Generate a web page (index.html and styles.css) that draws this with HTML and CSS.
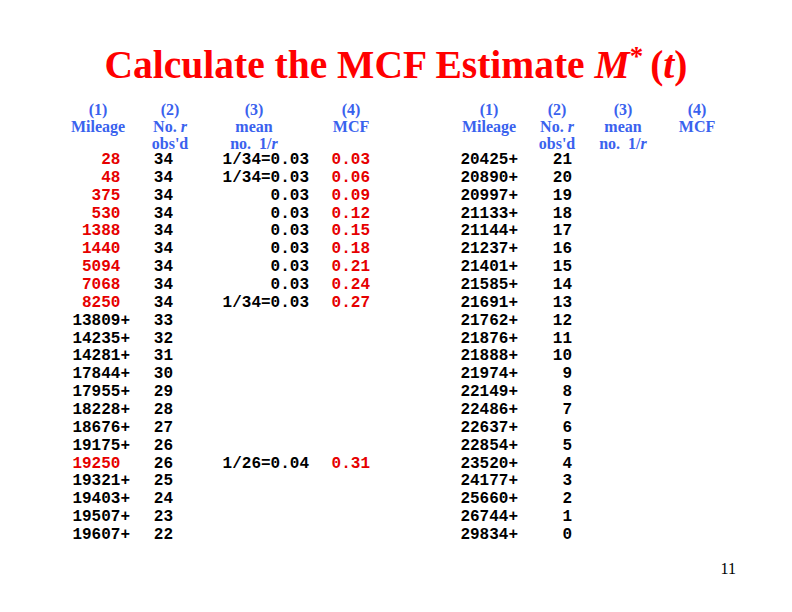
FILE: index.html
```html
<!DOCTYPE html>
<html>
<head>
<meta charset="utf-8">
<link rel="stylesheet" href="styles.css">
</head>
<body>
<div class="slide">
  <h1 class="title">Calculate the MCF Estimate <i>M</i><sup>*</sup><span class="paren">(<i>t</i>)</span></h1>
  <div class="tables">
    <div class="table left">
      <div class="col c1">
        <div class="hd">(1)<br>Mileage<br>&nbsp;</div>
        <div class="data">
          <div class="v red">28 </div><div class="v red">48 </div><div class="v red">375 </div><div class="v red">530 </div><div class="v red">1388 </div><div class="v red">1440 </div><div class="v red">5094 </div><div class="v red">7068 </div><div class="v red">8250 </div><div class="v">13809+</div><div class="v">14235+</div><div class="v">14281+</div><div class="v">17844+</div><div class="v">17955+</div><div class="v">18228+</div><div class="v">18676+</div><div class="v">19175+</div><div class="v red">19250 </div><div class="v">19321+</div><div class="v">19403+</div><div class="v">19507+</div><div class="v">19607+</div>
        </div>
      </div>
      <div class="col c2">
        <div class="hd">(2)<br>No. <i>r</i><br>obs'd</div>
        <div class="data">
          <div class="v">34</div><div class="v">34</div><div class="v">34</div><div class="v">34</div><div class="v">34</div><div class="v">34</div><div class="v">34</div><div class="v">34</div><div class="v">34</div><div class="v">33</div><div class="v">32</div><div class="v">31</div><div class="v">30</div><div class="v">29</div><div class="v">28</div><div class="v">27</div><div class="v">26</div><div class="v">26</div><div class="v">25</div><div class="v">24</div><div class="v">23</div><div class="v">22</div>
        </div>
      </div>
      <div class="col c3">
        <div class="hd">(3)<br>mean<br>no.&nbsp; 1/<i>r</i></div>
        <div class="data">
          <div class="v">1/34=0.03</div><div class="v">1/34=0.03</div><div class="v">0.03</div><div class="v">0.03</div><div class="v">0.03</div><div class="v">0.03</div><div class="v">0.03</div><div class="v">0.03</div><div class="v">1/34=0.03</div><div class="v"></div><div class="v"></div><div class="v"></div><div class="v"></div><div class="v"></div><div class="v"></div><div class="v"></div><div class="v"></div><div class="v">1/26=0.04</div>
        </div>
      </div>
      <div class="col c4">
        <div class="hd">(4)<br>MCF<br>&nbsp;</div>
        <div class="data">
          <div class="v red">0.03</div><div class="v red">0.06</div><div class="v red">0.09</div><div class="v red">0.12</div><div class="v red">0.15</div><div class="v red">0.18</div><div class="v red">0.21</div><div class="v red">0.24</div><div class="v red">0.27</div><div class="v"></div><div class="v"></div><div class="v"></div><div class="v"></div><div class="v"></div><div class="v"></div><div class="v"></div><div class="v"></div><div class="v red">0.31</div>
        </div>
      </div>
    </div>
    <div class="table right">
      <div class="col r1">
        <div class="hd">(1)<br>Mileage<br>&nbsp;</div>
        <div class="data">
          <div class="v">20425+</div><div class="v">20890+</div><div class="v">20997+</div><div class="v">21133+</div><div class="v">21144+</div><div class="v">21237+</div><div class="v">21401+</div><div class="v">21585+</div><div class="v">21691+</div><div class="v">21762+</div><div class="v">21876+</div><div class="v">21888+</div><div class="v">21974+</div><div class="v">22149+</div><div class="v">22486+</div><div class="v">22637+</div><div class="v">22854+</div><div class="v">23520+</div><div class="v">24177+</div><div class="v">25660+</div><div class="v">26744+</div><div class="v">29834+</div>
        </div>
      </div>
      <div class="col r2">
        <div class="hd">(2)<br>No. <i>r</i><br>obs'd</div>
        <div class="data">
          <div class="v">21</div><div class="v">20</div><div class="v">19</div><div class="v">18</div><div class="v">17</div><div class="v">16</div><div class="v">15</div><div class="v">14</div><div class="v">13</div><div class="v">12</div><div class="v">11</div><div class="v">10</div><div class="v">9</div><div class="v">8</div><div class="v">7</div><div class="v">6</div><div class="v">5</div><div class="v">4</div><div class="v">3</div><div class="v">2</div><div class="v">1</div><div class="v">0</div>
        </div>
      </div>
      <div class="col r3">
        <div class="hd">(3)<br>mean<br>no.&nbsp; 1/<i>r</i></div>
      </div>
      <div class="col r4">
        <div class="hd">(4)<br>MCF<br>&nbsp;</div>
      </div>
    </div>
  </div>
  <div class="footer"><span class="pagenum">11</span></div>
</div>
</body>
</html>
```

FILE: styles.css
```css
html, body {
  margin: 0;
  padding: 0;
  background: #ffffff;
}

.slide {
  width: 792px;
  height: 612px;
  display: flex;
  flex-direction: column;
  font-family: "Liberation Serif", "Times New Roman", serif;
}

.title {
  margin: 41px 0 0 0;
  height: 48px;
  font-size: 39.5px;
  line-height: 48px;
  font-weight: bold;
  color: #ff0000;
  text-align: center;
  white-space: nowrap;
}

.title sup {
  font-size: 27px;
  line-height: 0;
  vertical-align: 13px;
}

.title .paren {
  margin-left: 7px;
}

.tables {
  display: flex;
  margin-top: 12px;
  padding-left: 60px;
  gap: 65px;
}

.table {
  display: flex;
}

.col {
  display: flex;
  flex-direction: column;
}

.hd {
  font-family: "Liberation Serif", "Times New Roman", serif;
  font-weight: bold;
  font-size: 16px;
  line-height: 17px;
  color: #3a62ee;
  text-align: center;
  white-space: nowrap;
}

.data {
  margin-top: 0;
  font-family: "Liberation Mono", "Courier New", monospace;
  font-weight: bold;
  font-size: 16px;
  color: #000000;
  text-align: right;
}

.v {
  height: 17.86px;
  line-height: 17.86px;
  white-space: pre;
}

.v.red {
  color: #e60000;
}

.c1 { width: 76px; }
.c1 .data { padding-right: 6px; }

.c2 { width: 68px; }
.c2 .data { padding-right: 31px; }

.c3 { width: 112px; }
.c3 .hd { padding-right: 12px; }
.c3 .data { padding-right: 7px; }

.c4 { width: 70px; }
.c4 .data { padding-right: 16px; }

.r1 { width: 76px; }
.r1 .data { padding-right: 9px; }

.r2 { width: 60px; }
.r2 .data { padding-right: 15px; }

.r3 { width: 72px; }

.r4 { width: 76px; }

.footer {
  display: flex;
  justify-content: flex-end;
  padding-right: 56px;
  margin-top: 15px;
}

.pagenum {
  font-family: "Liberation Serif", "Times New Roman", serif;
  font-size: 16px;
  line-height: 18px;
  color: #000000;
}
```
